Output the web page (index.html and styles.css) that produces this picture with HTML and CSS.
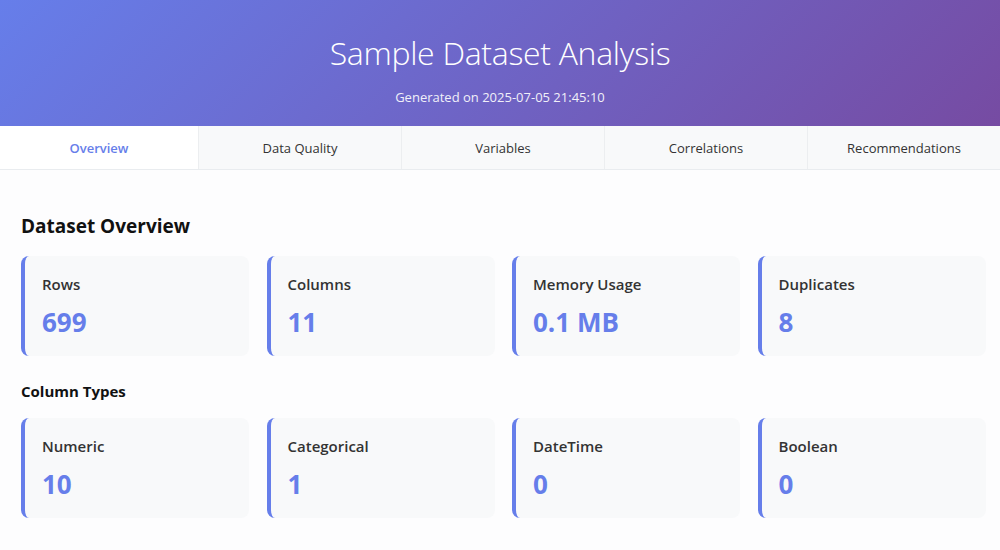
FILE: index.html
```html
<!DOCTYPE html>
<html>
<head>
<meta charset="utf-8">
<link rel="stylesheet" href="styles.css">
</head>
<body>
<header class="hero">
  <h1 class="hero-title">Sample Dataset Analysis</h1>
  <p class="hero-sub">Generated on 2025-07-05 21:45:10</p>
</header>
<nav class="tabs">
  <div class="tab tab-active">Overview</div>
  <div class="tab">Data Quality</div>
  <div class="tab">Variables</div>
  <div class="tab">Correlations</div>
  <div class="tab">Recommendations</div>
</nav>
<main class="content">
  <h2 class="section-title">Dataset Overview</h2>
  <div class="grid">
    <div class="card"><div class="card-label">Rows</div><div class="card-value">699</div></div>
    <div class="card"><div class="card-label">Columns</div><div class="card-value">11</div></div>
    <div class="card"><div class="card-label">Memory Usage</div><div class="card-value">0.1 MB</div></div>
    <div class="card"><div class="card-label">Duplicates</div><div class="card-value">8</div></div>
  </div>
  <h3 class="sub-title">Column Types</h3>
  <div class="grid">
    <div class="card"><div class="card-label">Numeric</div><div class="card-value">10</div></div>
    <div class="card"><div class="card-label">Categorical</div><div class="card-value">1</div></div>
    <div class="card"><div class="card-label">DateTime</div><div class="card-value">0</div></div>
    <div class="card"><div class="card-label">Boolean</div><div class="card-value">0</div></div>
  </div>
</main>
</body>
</html>
```
FILE: styles.css
```css
* { box-sizing: border-box; }
html, body { margin: 0; padding: 0; }
body {
  font-family: "Open Sans", "Noto Sans", sans-serif;
  background: #fdfdfe;
  color: #333;
  width: 1000px;
  overflow: hidden;
}
.hero {
  height: 126px;
  background: linear-gradient(135deg, #667eea 0%, #764ba2 100%);
  color: #fff;
  text-align: center;
  padding-top: 31px;
}
.hero-title {
  margin: 0;
  font-weight: 300;
  font-size: 32px;
  line-height: 44px;
  letter-spacing: -0.3px;
}
.hero-sub {
  margin: 13px 0 0;
  font-size: 13px;
  line-height: 18px;
  opacity: 0.9;
}
.tabs {
  display: grid;
  grid-template-columns: 199px 203px 203px 203px 1fr;
  height: 44px;
  background: #f8f9fa;
  border-bottom: 1px solid #e9ecef;
}
.tab {
  display: flex;
  align-items: center;
  justify-content: center;
  font-size: 13px;
  color: #333;
  border-right: 1px solid #eceef0;
}
.tab:last-child { border-right: none; }
.tab-active {
  background: #fff;
  color: #667eea;
  font-weight: 600;
}
.content {
  padding: 43px 15px 0 21px;
}
.section-title {
  margin: 0 0 17px;
  font-size: 19px;
  line-height: 26px;
  font-weight: 700;
  color: #111;
}
.sub-title {
  margin: 25px 0 17px;
  font-size: 15px;
  line-height: 20px;
  font-weight: 700;
  color: #111;
}
.grid {
  display: grid;
  grid-template-columns: repeat(4, 228px);
  column-gap: 17.5px;
}
.card {
  height: 100px;
  background: #f8f9fa;
  border-left: 4px solid #667eea;
  border-radius: 8px;
  padding: 18px 17px 0;
}
.card-label {
  font-size: 15px;
  line-height: 20px;
  font-weight: 600;
  color: #333;
}
.card-value {
  margin-top: 10px;
  font-size: 26px;
  line-height: 36px;
  font-weight: 700;
  color: #667eea;
}
```
